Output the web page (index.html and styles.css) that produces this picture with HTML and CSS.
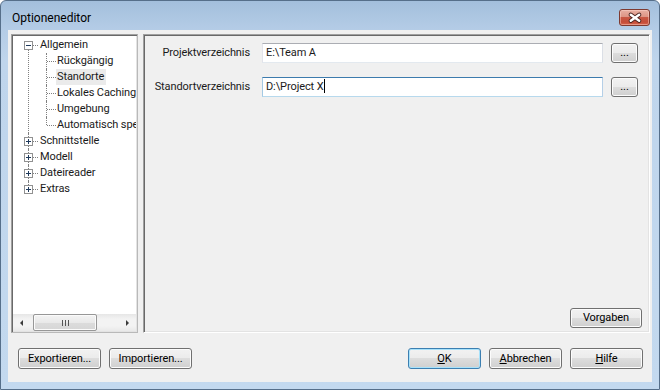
FILE: index.html
```html
<!DOCTYPE html>
<html lang="de">
<head>
<meta charset="utf-8">
<title>Optioneneditor</title>
<link rel="stylesheet" href="styles.css">
</head>
<body>
<div class="window">
  <div class="titlebar">
    <span class="title">Optioneneditor</span>
    <button class="close" aria-label="Schließen">
      <svg width="31" height="17" viewBox="0 0 31 17">
        <path d="M11.5 5.5 L20.5 12 M20.5 5.5 L11.5 12" stroke="#4b2420" stroke-width="4.6" stroke-linecap="round" fill="none"/>
        <path d="M11.5 5.5 L20.5 12 M20.5 5.5 L11.5 12" stroke="#ffffff" stroke-width="2.6" stroke-linecap="round" fill="none"/>
      </svg>
    </button>
  </div>
  <div class="client">
    <div class="main">
      <div class="tree">
        <div class="tree-view">
          <ul class="nodes root">
            <li>
              <div class="row"><span class="exp"><svg width="9" height="9" viewBox="0 0 9 9"><rect x="0.5" y="0.5" width="8" height="8" fill="#fff" stroke="#919191"/><path d="M2 4.5 H7" stroke="#1e395b"/></svg></span><span class="label">Allgemein</span></div>
              <ul class="nodes children">
                <li><div class="row"><span class="label">Rückgängig</span></div></li>
                <li><div class="row"><span class="label selected">Standorte</span></div></li>
                <li><div class="row"><span class="label">Lokales Caching</span></div></li>
                <li><div class="row"><span class="label">Umgebung</span></div></li>
                <li><div class="row"><span class="label">Automatisch speichern</span></div></li>
              </ul>
            </li>
            <li><div class="row"><span class="exp"><svg width="9" height="9" viewBox="0 0 9 9"><rect x="0.5" y="0.5" width="8" height="8" fill="#fff" stroke="#919191"/><path d="M2 4.5 H7 M4.5 2 V7" stroke="#1e395b"/></svg></span><span class="label">Schnittstelle</span></div></li>
            <li><div class="row"><span class="exp"><svg width="9" height="9" viewBox="0 0 9 9"><rect x="0.5" y="0.5" width="8" height="8" fill="#fff" stroke="#919191"/><path d="M2 4.5 H7 M4.5 2 V7" stroke="#1e395b"/></svg></span><span class="label">Modell</span></div></li>
            <li><div class="row"><span class="exp"><svg width="9" height="9" viewBox="0 0 9 9"><rect x="0.5" y="0.5" width="8" height="8" fill="#fff" stroke="#919191"/><path d="M2 4.5 H7 M4.5 2 V7" stroke="#1e395b"/></svg></span><span class="label">Dateireader</span></div></li>
            <li><div class="row"><span class="exp"><svg width="9" height="9" viewBox="0 0 9 9"><rect x="0.5" y="0.5" width="8" height="8" fill="#fff" stroke="#919191"/><path d="M2 4.5 H7 M4.5 2 V7" stroke="#1e395b"/></svg></span><span class="label">Extras</span></div></li>
          </ul>
        </div>
        <div class="hscroll">
          <span class="sb-btn"><span class="arrow-left"></span></span>
          <div class="sb-track"><div class="sb-thumb"><span class="grip"></span></div></div>
          <span class="sb-btn"><span class="arrow-right"></span></span>
        </div>
      </div>
      <div class="panel">
        <div class="form">
          <label class="lbl">Projektverzeichnis</label>
          <div class="input">E:\Team A</div>
          <button class="btn browse">...</button>
          <label class="lbl">Standortverzeichnis</label>
          <div class="input focused">D:\Project X<span class="caret"></span></div>
          <button class="btn browse">...</button>
        </div>
        <div class="panel-foot">
          <button class="btn vorgaben">Vorgaben</button>
        </div>
      </div>
    </div>
    <div class="bottom">
      <div class="group">
        <button class="btn wide">Exportieren...</button>
        <button class="btn wide">Importieren...</button>
      </div>
      <div class="group">
        <button class="btn std default"><u>O</u>K</button>
        <button class="btn std"><u>A</u>bbrechen</button>
        <button class="btn std"><u>H</u>ilfe</button>
      </div>
    </div>
  </div>
</div>
</body>
</html>
```
FILE: styles.css
```css
* { box-sizing: border-box; }
html, body { margin: 0; padding: 0; }
body {
  width: 660px;
  height: 390px;
  overflow: hidden;
  background: #ffffff;
  font-family: Roboto, "Noto Sans", sans-serif;
  font-size: 11px;
  letter-spacing: -0.1px;
  color: #1a1a1a;
}

.window {
  width: 660px;
  height: 390px;
  display: flex;
  flex-direction: column;
  border: 1px solid #566f8a;
  border-radius: 6px 6px 0 0;
  background: linear-gradient(#a3bfdc 0px, #b4cce6 28px, #bfd5ec 60px, #c3d9ef 100%);
  padding: 0 7px 7px 7px;
}

.titlebar {
  height: 29px;
  display: flex;
  justify-content: space-between;
  align-items: flex-start;
}
.title {
  padding: 9px 0 0 4px;
  line-height: 16px;
  font-size: 12px;
  letter-spacing: 0;
  color: #000;
}
.close {
  margin-top: 8px;
  margin-right: 2px;
  width: 31px;
  height: 17px;
  padding: 0;
  border: 1px solid #7e3a30;
  border-radius: 3px;
  background: linear-gradient(#e8b0a3 0%, #dd9585 45%, #c85844 50%, #c44c38 80%, #d7644c 100%);
  box-shadow: inset 0 0 0 1px rgba(255, 220, 210, 0.45);
  display: flex;
  align-items: center;
  justify-content: center;
}
.close svg { display: block; }

.client {
  flex: 1;
  background: #f0f0f0;
  display: flex;
  flex-direction: column;
  padding: 4px 2px 0 3px;
}

.main {
  display: flex;
  gap: 5px;
  height: 299px;
}

/* Tree */
.tree {
  width: 127px;
  display: flex;
  flex-direction: column;
  background: #fff;
  border: 1px solid;
  border-color: #a0a0a0 #b9b9b9 #b9b9b9 #a0a0a0;
  box-shadow: inset 1px 1px 0 #696969, inset -1px -1px 0 #e3e3e3;
  padding: 1px;
}
.tree-view {
  flex: 1;
  overflow: hidden;
  padding-top: 1px;
}
.nodes { list-style: none; margin: 0; padding: 0; }
.root > li { position: relative; }
.root > li::before {
  content: "";
  position: absolute;
  left: 15px;
  top: 0;
  bottom: 0;
  border-left: 1px dotted #808080;
}
.root > li:first-child::before { top: 8px; }
.root > li:last-child::before { bottom: auto; height: 8px; }
.row {
  position: relative;
  height: 16px;
  line-height: 16px;
  padding-left: 26px;
  white-space: nowrap;
}
.root > li > .row::after {
  content: "";
  position: absolute;
  left: 20px;
  top: 8px;
  width: 5px;
  border-top: 1px dotted #808080;
}
.exp {
  position: absolute;
  left: 11px;
  top: 4px;
  width: 9px;
  height: 9px;
  z-index: 1;
}
.exp svg { display: block; }
.children > li { position: relative; }
.children > li::before {
  content: "";
  position: absolute;
  left: 33px;
  top: 0;
  bottom: 0;
  border-left: 1px dotted #808080;
}
.children > li:last-child::before { bottom: auto; height: 8px; }
.children .row { padding-left: 43px; }
.children .row::after {
  content: "";
  position: absolute;
  left: 34px;
  top: 8px;
  width: 9px;
  border-top: 1px dotted #808080;
}
.label {
  display: inline-block;
  padding: 0 2px 0 1px;
  height: 16px;
}
.label.selected { background: #ebebeb; }

.hscroll {
  height: 17px;
  display: flex;
  background: linear-gradient(to bottom, #e6e6e6, #f3f3f3 30%, #f3f3f3 70%, #e9e9e9);
}
.sb-btn {
  width: 17px;
  display: flex;
  align-items: center;
  justify-content: center;
}
.arrow-left {
  width: 0; height: 0;
  border-top: 3px solid transparent;
  border-bottom: 3px solid transparent;
  border-right: 3px solid #3c3c3c;
}
.arrow-right {
  width: 0; height: 0;
  border-top: 3px solid transparent;
  border-bottom: 3px solid transparent;
  border-left: 3px solid #3c3c3c;
}
.sb-track {
  flex: 1;
  padding: 0 0 0 3px;
  display: flex;
}
.sb-thumb {
  width: 64px;
  height: 17px;
  border: 1px solid #979797;
  border-radius: 2px;
  background: linear-gradient(#f4f4f4 0%, #e9e9e9 50%, #dcdcdc 51%, #d6d6d6 100%);
  box-shadow: inset 0 0 0 1px #fbfbfb;
  display: flex;
  align-items: center;
  justify-content: center;
}
.grip {
  width: 7px;
  height: 6px;
  background: repeating-linear-gradient(to right, #555 0 1px, transparent 1px 3px);
}

/* Right panel */
.panel {
  flex: 1;
  display: flex;
  flex-direction: column;
  border: 1px solid;
  border-color: #a0a0a0 #ffffff #ffffff #a0a0a0;
  box-shadow: inset 1px 1px 0 #696969, inset -1px -1px 0 #e3e3e3;
  padding: 8px 7px 4px 1px;
}
.form {
  display: grid;
  grid-template-columns: 105px 1fr 27px;
  grid-auto-rows: 20px;
  column-gap: 12px;
  row-gap: 14px;
  align-items: center;
}
.form .browse { margin-left: -4px; }
.lbl {
  text-align: right;
  white-space: nowrap;
  line-height: 20px;
}
.input {
  height: 20px;
  background: #fff;
  border: 1px solid;
  border-color: #abadb3 #dbdfe6 #e3e9ef #e2e3ea;
  padding: 0 3px;
  line-height: 18px;
  white-space: nowrap;
}
.input.focused {
  border-color: #3d7bad #b5cfe7 #b7d9ed #a4c9e3;
}
.caret {
  display: inline-block;
  width: 1px;
  height: 14px;
  background: #000;
  vertical-align: -3px;
  margin-left: 1px;
}
.panel-foot {
  flex: 1;
  display: flex;
  justify-content: flex-end;
  align-items: flex-end;
}

/* Buttons */
.btn {
  height: 21px;
  padding: 0;
  font: inherit;
  letter-spacing: inherit;
  color: #000;
  border: 1px solid #707070;
  border-radius: 3px;
  background: linear-gradient(#f2f2f2 0%, #ebebeb 50%, #dddddd 50%, #cfcfcf 100%);
  box-shadow: inset 0 0 0 1px #fcfcfc;
  line-height: 19px;
  text-align: center;
}
.browse {
  width: 27px;
  height: 20px;
  line-height: 18px;
}
.vorgaben { width: 72px; height: 20px; line-height: 18px; }
.wide { width: 83px; }
.std { width: 73px; }
.default {
  border-color: #3c7fb1;
  box-shadow: inset 0 0 0 1px #a8e2fb;
}

.bottom {
  display: flex;
  justify-content: space-between;
  padding: 15px 7px 0 7px;
}
.group {
  display: flex;
  gap: 8px;
}
```
